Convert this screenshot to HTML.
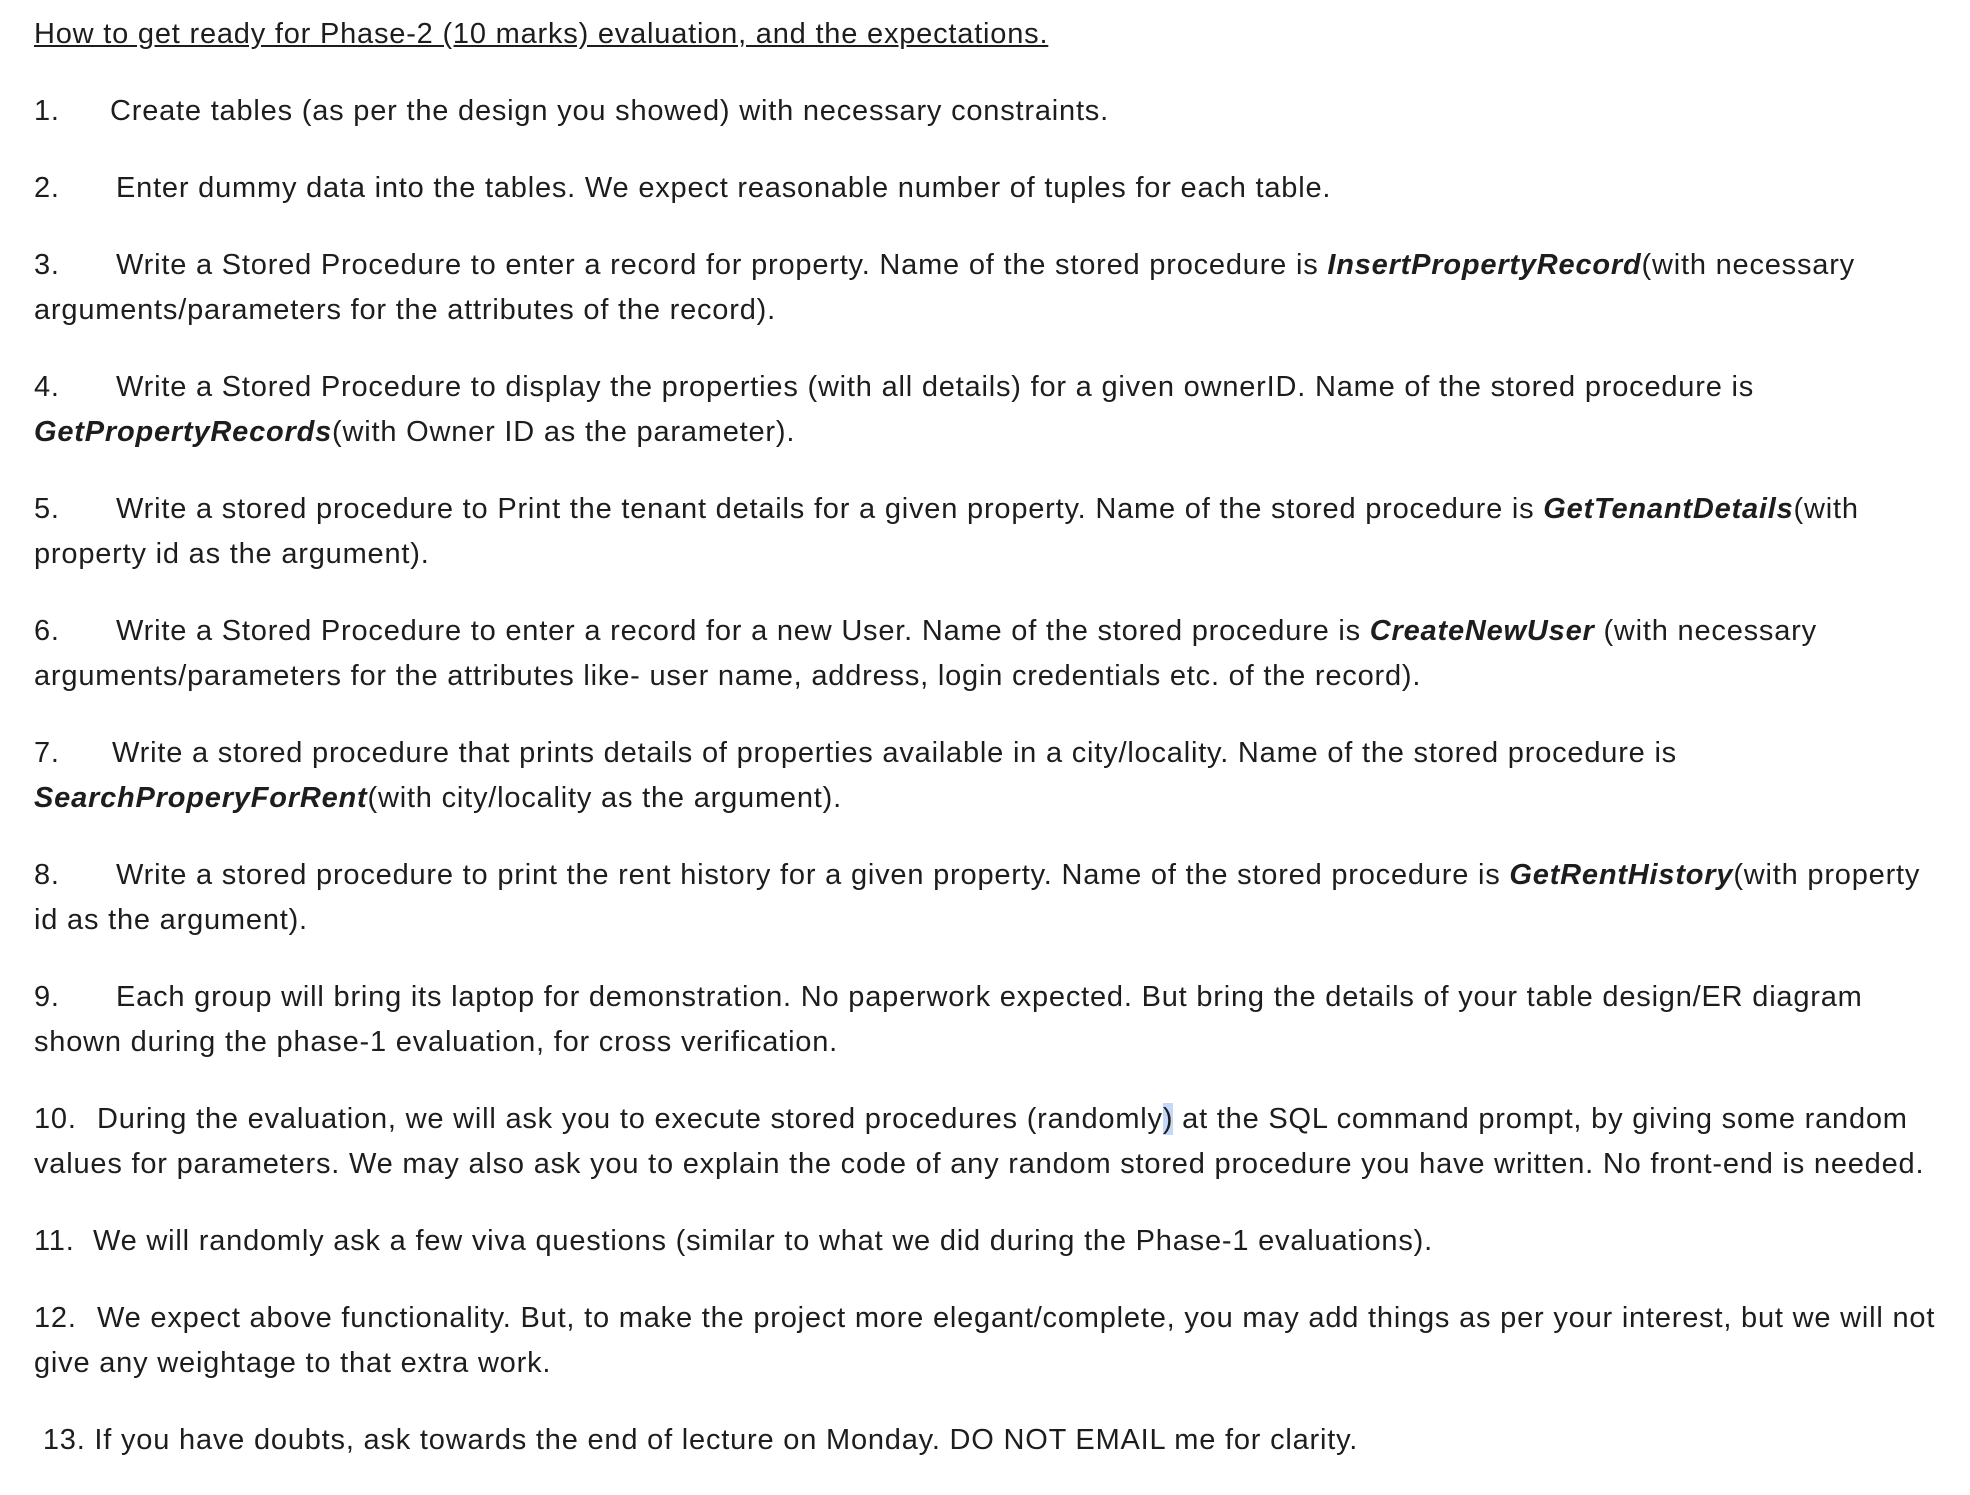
<!DOCTYPE html>
<html><head><meta charset="utf-8"><style>
body{margin:0;background:#fff;width:1970px;height:1488px;overflow:hidden}
.w{position:absolute;left:34px;top:12px;font-family:"Liberation Sans",Arial,sans-serif;font-size:29px;letter-spacing:0.8px;color:#1d1d1f;line-height:45px;white-space:nowrap}
p{margin:0 0 32px 0}
.n{display:inline-block}
b{font-style:italic;font-weight:bold}
.hl{background:#c5d8f7}
</style></head><body><div class="w">
<p><u>How to get ready for Phase-2 (10 marks) evaluation, and the expectations.</u></p>
<p><span class="n" style="width:76px">1.</span>Create tables (as per the design you showed) with necessary constraints.</p>
<p><span class="n" style="width:82px">2.</span>Enter dummy data into the tables. We expect reasonable number of tuples for each table.</p>
<p><span class="n" style="width:82px">3.</span>Write a Stored Procedure to enter a record for property. Name of the stored procedure is <b>InsertPropertyRecord</b>(with necessary<br>arguments/parameters for the attributes of the record).</p>
<p><span class="n" style="width:82px">4.</span>Write a Stored Procedure to display the properties (with all details) for a given ownerID. Name of the stored procedure is<br><b>GetPropertyRecords</b>(with Owner ID as the parameter).</p>
<p><span class="n" style="width:82px">5.</span>Write a stored procedure to Print the tenant details for a given property. Name of the stored procedure is <b>GetTenantDetails</b>(with<br>property id as the argument).</p>
<p><span class="n" style="width:82px">6.</span>Write a Stored Procedure to enter a record for a new User. Name of the stored procedure is <b>CreateNewUser</b> (with necessary<br>arguments/parameters for the attributes like- user name, address, login credentials etc. of the record).</p>
<p><span class="n" style="width:78px">7.</span>Write a stored procedure that prints details of properties available in a city/locality. Name of the stored procedure is<br><b>SearchProperyForRent</b>(with city/locality as the argument).</p>
<p><span class="n" style="width:82px">8.</span>Write a stored procedure to print the rent history for a given property. Name of the stored procedure is <b>GetRentHistory</b>(with property<br>id as the argument).</p>
<p><span class="n" style="width:82px">9.</span>Each group will bring its laptop for demonstration. No paperwork expected. But bring the details of your table design/ER diagram<br>shown during the phase-1 evaluation, for cross verification.</p>
<p><span class="n" style="width:63px">10.</span>During the evaluation, we will ask you to execute stored procedures (randomly<span class="hl">)</span> at the SQL command prompt, by giving some random<br>values for parameters. We may also ask you to explain the code of any random stored procedure you have written. No front-end is needed.</p>
<p><span class="n" style="width:59px">11.</span>We will randomly ask a few viva questions (similar to what we did during the Phase-1 evaluations).</p>
<p><span class="n" style="width:63px">12.</span>We expect above functionality. But, to make the project more elegant/complete, you may add things as per your interest, but we will not<br>give any weightage to that extra work.</p>
<p>&nbsp;13. If you have doubts, ask towards the end of lecture on Monday. DO NOT EMAIL me for clarity.</p>
</div></body></html>
